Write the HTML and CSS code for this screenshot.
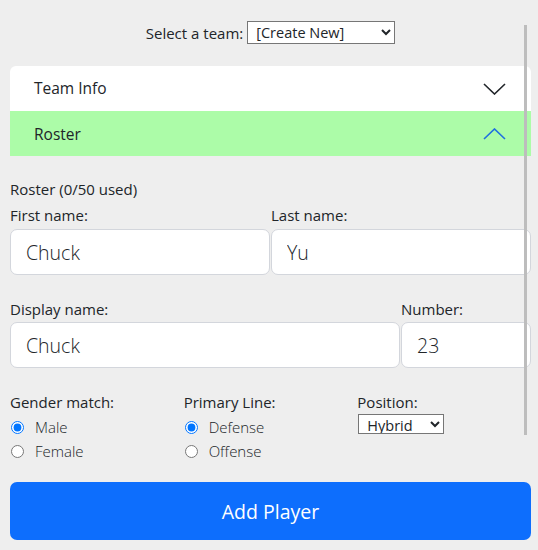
FILE: index.html
```html
<!DOCTYPE html>
<html>
<head>
<meta charset="utf-8">
<link rel="stylesheet" href="styles.css">
</head>
<body>
<div class="page">
  <div class="team-select">
    <label for="team">Select a team:</label>
    <select id="team" class="sel sel-team"><option>[Create New]</option></select>
  </div>

  <div class="accordion">
    <div class="acc-head acc-first">
      <span>Team Info</span>
      <svg class="chev" width="23" height="12" viewBox="0 0 23 12"><polyline points="1,1 11.5,11 22,1" fill="none" stroke="#212529" stroke-width="1.6"/></svg>
    </div>
    <div class="acc-head acc-open">
      <span>Roster</span>
      <svg class="chev" width="23" height="12" viewBox="0 0 23 12"><polyline points="1,11 11.5,1 22,11" fill="none" stroke="#1f6fe0" stroke-width="1.6"/></svg>
    </div>
  </div>

  <div class="roster">
    <div class="line">Roster (0/50 used)</div>
    <div class="row">
      <div class="field">
        <label class="line">First name:</label>
        <input class="inp" type="text" value="Chuck">
      </div>
      <div class="field">
        <label class="line">Last name:</label>
        <input class="inp" type="text" value="Yu">
      </div>
    </div>
    <div class="row row-2">
      <div class="field field-wide">
        <label class="line">Display name:</label>
        <input class="inp" type="text" value="Chuck">
      </div>
      <div class="field field-num">
        <label class="line">Number:</label>
        <input class="inp" type="text" value="23">
      </div>
    </div>
    <div class="opts">
      <div class="opt">
        <div class="line">Gender match:</div>
        <div class="radios">
          <label class="radio"><input type="radio" name="g" checked> Male</label>
          <label class="radio"><input type="radio" name="g"> Female</label>
        </div>
      </div>
      <div class="opt">
        <div class="line">Primary Line:</div>
        <div class="radios">
          <label class="radio"><input type="radio" name="l" checked> Defense</label>
          <label class="radio"><input type="radio" name="l"> Offense</label>
        </div>
      </div>
      <div class="opt">
        <div class="line">Position:</div>
        <select class="sel sel-pos"><option>Hybrid</option></select>
      </div>
    </div>
    <button class="btn-add">Add Player</button>
  </div>
</div>
<div class="scrollbar"></div>
</body>
</html>
```

FILE: styles.css
```css
html, body {
  margin: 0;
  padding: 0;
  background: #eeeeee;
}
body {
  font-family: "Open Sans", "Noto Sans", sans-serif;
  font-size: 15px;
  color: #212529;
}
.page {
  width: 521px;
  padding: 0 7px 0 10px;
}
.team-select {
  display: flex;
  justify-content: center;
  align-items: center;
  gap: 4px;
  padding-top: 21px;
  height: 23px;
}
.sel {
  font-family: "Open Sans", "Noto Sans", sans-serif;
  font-size: 14.5px;
  color: #212529;
  background: #fff;
  border: 1px solid #767676;
  border-radius: 0;
  padding: 0 4px;
  margin: 0;
}
.sel-team {
  width: 148px;
  height: 23px;
}
.sel-pos {
  width: 86px;
  height: 20px;
  margin-top: 1px;
  margin-left: 1px;
}
.accordion {
  margin-top: 22px;
  background: #fff;
  border-radius: 6px 6px 0 0;
  overflow: hidden;
}
.acc-head {
  height: 45px;
  display: flex;
  align-items: center;
  justify-content: space-between;
  padding: 0 25px 0 24px;
  font-size: 15.5px;
}
.acc-first {
  padding-bottom: 1px;
  height: 44px;
}
.acc-open {
  background: #acfca8;
}
.chev {
  display: block;
  margin-top: 1px;
}
.roster {
  padding-top: 22px;
}
.line {
  display: block;
  height: 22px;
  line-height: 22px;
}
.row {
  display: flex;
  margin-top: 4px;
}
.row-2 {
  margin-top: 23px;
}
.field {
  flex: 1 1 0;
  display: flex;
  flex-direction: column;
  min-width: 0;
}
.field + .field {
  margin-left: 1px;
}
.field-wide {
  flex: 0 0 390px;
}
.field-num {
  flex: 1 1 0;
}
.field .line + .inp {
  margin-top: 3px;
}
.row-2 .field .line + .inp {
  margin-top: 2px;
}
.inp {
  box-sizing: border-box;
  width: 100%;
  height: 46px;
  border: 1px solid #d3d6dc;
  border-radius: 7px;
  background: #fff;
  padding: 0 15px;
  font-family: "Open Sans", "Noto Sans", sans-serif;
  font-weight: 300;
  font-size: 19.5px;
  color: #212529;
  margin: 0;
  outline: none;
}
.opts {
  display: grid;
  grid-template-columns: 1fr 1fr 1fr;
  margin-top: 23px;
}
.radios {
  padding-top: 2px;
}
.radio {
  display: flex;
  align-items: center;
  height: 24px;
  font-size: 15px;
  font-weight: 300;
}
.radio input {
  margin: 0 11px 0 1px;
  width: 13px;
  height: 13px;
}
.btn-add {
  display: block;
  width: 100%;
  height: 58px;
  margin-top: 19px;
  border: none;
  border-radius: 7px;
  background: #0d6efd;
  color: #fff;
  font-family: "Open Sans", "Noto Sans", sans-serif;
  font-size: 19.5px;
  font-weight: 400;
}
.scrollbar {
  position: absolute;
  left: 524px;
  top: 25px;
  width: 3px;
  height: 410px;
  background: #bdbdbd;
}
```
